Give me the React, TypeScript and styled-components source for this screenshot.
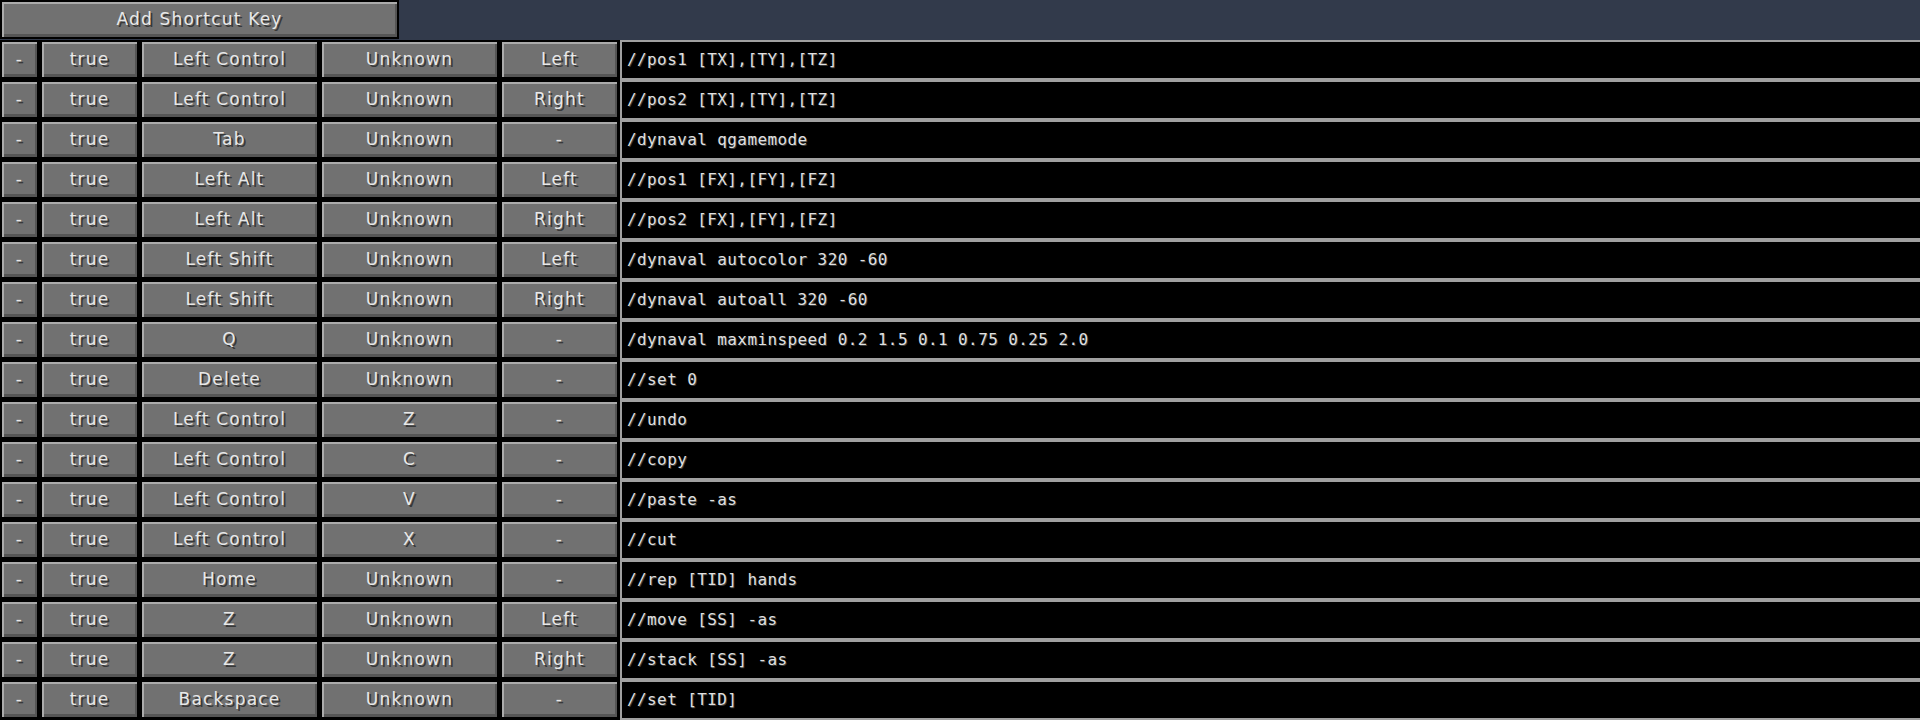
import styled, { createGlobalStyle } from "styled-components";

interface Shortcut {
  key1: string;
  key2: string;
  mouse: string;
  command: string;
}

const shortcuts: Shortcut[] = [
  { key1: "Left Control", key2: "Unknown", mouse: "Left", command: "//pos1 [TX],[TY],[TZ]" },
  { key1: "Left Control", key2: "Unknown", mouse: "Right", command: "//pos2 [TX],[TY],[TZ]" },
  { key1: "Tab", key2: "Unknown", mouse: "-", command: "/dynaval qgamemode" },
  { key1: "Left Alt", key2: "Unknown", mouse: "Left", command: "//pos1 [FX],[FY],[FZ]" },
  { key1: "Left Alt", key2: "Unknown", mouse: "Right", command: "//pos2 [FX],[FY],[FZ]" },
  { key1: "Left Shift", key2: "Unknown", mouse: "Left", command: "/dynaval autocolor 320 -60" },
  { key1: "Left Shift", key2: "Unknown", mouse: "Right", command: "/dynaval autoall 320 -60" },
  { key1: "Q", key2: "Unknown", mouse: "-", command: "/dynaval maxminspeed 0.2 1.5 0.1 0.75 0.25 2.0" },
  { key1: "Delete", key2: "Unknown", mouse: "-", command: "//set 0" },
  { key1: "Left Control", key2: "Z", mouse: "-", command: "//undo" },
  { key1: "Left Control", key2: "C", mouse: "-", command: "//copy" },
  { key1: "Left Control", key2: "V", mouse: "-", command: "//paste -as" },
  { key1: "Left Control", key2: "X", mouse: "-", command: "//cut" },
  { key1: "Home", key2: "Unknown", mouse: "-", command: "//rep [TID] hands" },
  { key1: "Z", key2: "Unknown", mouse: "Left", command: "//move [SS] -as" },
  { key1: "Z", key2: "Unknown", mouse: "Right", command: "//stack [SS] -as" },
  { key1: "Backspace", key2: "Unknown", mouse: "-", command: "//set [TID]" },
];

const GlobalStyle = createGlobalStyle`
  html, body {
    margin: 0;
    padding: 0;
    background: #323a4b;
    overflow: hidden;
  }
  body {
    font-family: "DejaVu Sans", "Noto Sans", sans-serif;
  }
`;

const Screen = styled.div`
  width: 1920px;
  height: 720px;
  display: flex;
  flex-direction: column;
  background: #323a4b;
`;

const TopBar = styled.div`
  display: flex;
  height: 40px;
`;

const Row = styled.div`
  display: grid;
  grid-template-columns: 40px 100px 180px 180px 120px 1fr;
  height: 40px;
  background: #000;
`;

const McButton = styled.button<{ $width?: number }>`
  box-sizing: border-box;
  width: ${({ $width }) => ($width ? `${$width}px` : "calc(100% - 1px)")};
  height: 39px;
  margin: 0;
  padding: 0 0 2px 0;
  border: 2px solid #000;
  background: #717171;
  box-shadow: inset 2px 2px 0 #ababab, inset -2px -3px 0 #555555;
  color: #e8e8e8;
  font-family: "DejaVu Sans", "Noto Sans", sans-serif;
  font-size: 17px;
  letter-spacing: 1.2px;
  text-shadow: 2px 2px 0 #383838;
  display: flex;
  align-items: center;
  justify-content: center;
  white-space: nowrap;
  cursor: pointer;
`;

const CommandField = styled.div`
  box-sizing: border-box;
  height: 40px;
  margin-right: -2px;
  border: 2px solid #a0a0a0;
  background: #000;
  color: #e0e0e0;
  font-family: "DejaVu Sans Mono", "Liberation Mono", monospace;
  font-size: 16px;
  letter-spacing: 0.4px;
  text-shadow: 1px 1px 0 #3a3a3a;
  display: flex;
  align-items: center;
  padding: 0 0 1px 5px;
  white-space: nowrap;
  overflow: hidden;
`;

export default function App() {
  return (
    <>
      <GlobalStyle />
      <Screen>
        <TopBar>
          <McButton $width={399}>Add Shortcut Key</McButton>
        </TopBar>
        {shortcuts.map((s, i) => (
          <Row key={i}>
            <McButton>-</McButton>
            <McButton>true</McButton>
            <McButton>{s.key1}</McButton>
            <McButton>{s.key2}</McButton>
            <McButton>{s.mouse}</McButton>
            <CommandField>{s.command}</CommandField>
          </Row>
        ))}
      </Screen>
    </>
  );
}
